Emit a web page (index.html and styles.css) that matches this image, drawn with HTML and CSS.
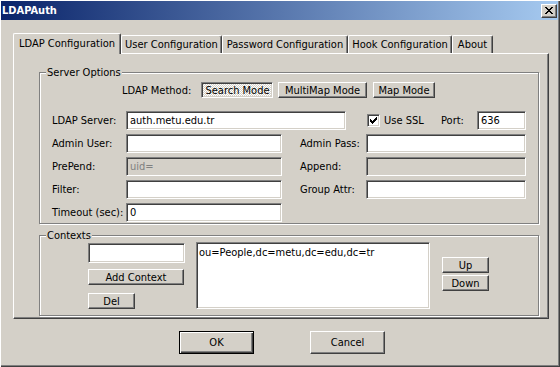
FILE: index.html
```html
<!DOCTYPE html>
<html>
<head>
<meta charset="utf-8">
<title>LDAPAuth</title>
<link rel="stylesheet" href="styles.css">
</head>
<body>
<div class="window">
  <div class="titlebar">
    <span class="title">LDAPAuth</span>
    <span class="close-btn">
      <svg width="8" height="7" viewBox="0 0 8 7"><path d="M0 0h2v1h-2z M6 0h2v1h-2z M1 1h2v1h-2z M5 1h2v1h-2z M2 2h4v1h-4z M3 3h2v1h-2z M2 4h4v1h-4z M1 5h2v1h-2z M5 5h2v1h-2z M0 6h2v1h-2z M6 6h2v1h-2z" fill="#000"/></svg>
    </span>
  </div>
  <div class="content">
    <div class="tabs">
      <div class="tab active t1">LDAP Configuration</div>
      <div class="tab t2">User Configuration</div>
      <div class="tab t3">Password Configuration</div>
      <div class="tab t4">Hook Configuration</div>
      <div class="tab t5">About</div>
    </div>
    <div class="panel">
      <div class="group server">
        <div class="legend">Server Options</div>
        <div class="method-row">
          <span class="method-label">LDAP Method:</span>
          <button class="btn pressed w-search">Search Mode</button>
          <button class="btn w-multi">MultiMap Mode</button>
          <button class="btn w-map">Map Mode</button>
        </div>
        <div class="row first">
          <span class="lbl">LDAP Server:</span>
          <input class="field w-server" value="auth.metu.edu.tr">
          <span class="check"><svg width="7" height="7" viewBox="0 0 7 7"><path d="M6 0h1v1h-1z M5 1h2v1h-2z M0 2h1v1h-1z M4 2h3v1h-3z M0 3h2v1h-2z M3 3h3v1h-3z M0 4h5v1h-5z M1 5h3v1h-3z M2 6h1v1h-1z" fill="#000"/></svg></span>
          <span class="check-text">Use SSL</span>
          <span class="port-lbl">Port:</span>
          <input class="field w-port" value="636">
        </div>
        <div class="row">
          <span class="lbl">Admin User:</span>
          <input class="field w-left" value="">
          <span class="lbl-r">Admin Pass:</span>
          <input class="field w-right" value="">
        </div>
        <div class="row">
          <span class="lbl">PrePend:</span>
          <input class="field w-left" value="uid=" disabled>
          <span class="lbl-r">Append:</span>
          <input class="field w-right" value="" disabled>
        </div>
        <div class="row">
          <span class="lbl">Filter:</span>
          <input class="field w-left" value="">
          <span class="lbl-r">Group Attr:</span>
          <input class="field w-right" value="">
        </div>
        <div class="row">
          <span class="lbl">Timeout (sec):</span>
          <input class="field w-left" value="0">
        </div>
      </div>
      <div class="group contexts">
        <div class="legend">Contexts</div>
        <div class="ctx-row">
          <div class="ctx-left">
            <input class="field w-ctx" value="">
            <button class="btn w-add">Add Context</button>
            <button class="btn w-del">Del</button>
          </div>
          <div class="listbox">ou=People,dc=metu,dc=edu,dc=tr</div>
          <div class="ctx-right">
            <button class="btn w-up">Up</button>
            <button class="btn w-down">Down</button>
          </div>
        </div>
      </div>
    </div>
    <div class="actions">
      <button class="btn default w-ok">OK</button>
      <button class="btn w-cancel">Cancel</button>
    </div>
  </div>
</div>
</body>
</html>
```
FILE: styles.css
```css
* { box-sizing: border-box; }

html, body {
  margin: 0;
  padding: 0;
  background: #d4d0c8;
}

body {
  font-family: "DejaVu Sans Condensed", "DejaVu Sans", sans-serif;
  font-size: 11px;
  line-height: 13px;
  color: #000;
}

.window {
  width: 560px;
  height: 367px;
  overflow: hidden;
  box-shadow: inset 1px 1px 0 #fff, inset -1px -1px 0 #404040, inset -2px -2px 0 #808080;
}

.titlebar {
  margin: 1px 2px 0 1px;
  height: 19px;
  background: linear-gradient(to right, #0a246a, #a6caf0);
  display: flex;
  align-items: center;
  justify-content: space-between;
  padding: 0 1px 0 1px;
}

.title {
  color: #fff;
  font-weight: bold;
}

.close-btn {
  width: 16px;
  height: 14px;
  margin-top: 1px;
  background: #d4d0c8;
  border: 1px solid;
  border-color: #fff #404040 #404040 #fff;
  box-shadow: inset -1px -1px 0 #808080;
  display: flex;
  align-items: center;
  justify-content: center;
  padding: 0 1px 1px 0;
}
.close-btn svg { display: block; }

.content {
  padding: 13px 0 0 13px;
}

/* Tabs */
.tabs {
  display: flex;
  align-items: flex-start;
  height: 21px;
  margin-bottom: -1px;
  position: relative;
  z-index: 1;
}

.tab {
  height: 18px;
  margin-top: 2px;
  border: 1px solid;
  border-bottom: none;
  border-color: #fff #404040 #fff #fff;
  border-radius: 2px 2px 0 0;
  box-shadow: inset -1px 0 0 #808080;
  padding-top: 2px;
  text-align: center;
  white-space: nowrap;
  background: #d4d0c8;
}

.tab.active {
  height: 21px;
  margin-top: 0;
  padding-top: 3px;
}

.t1 { width: 108px; }
.t2 { width: 101px; }
.t3 { width: 126px; }
.t4 { width: 104px; }
.t5 { width: 41px; }

.panel {
  width: 536px;
  height: 266px;
  border: 1px solid;
  border-color: #fff #404040 #404040 #fff;
  box-shadow: inset -1px -1px 0 #808080;
  padding: 18px 0 0 25px;
}

/* Group boxes */
.group {
  width: 500px;
  border: 1px solid #808080;
  box-shadow: inset 1px 1px 0 #fff, 1px 1px 0 #fff;
}

.server { height: 152px; }
.contexts { height: 81px; margin-top: 11px; }

.legend {
  display: table;
  margin: -7px 0 -6px 6px;
  padding: 0 1px;
  background: #d4d0c8;
}

/* Buttons */
.btn {
  font: inherit;
  color: #000;
  height: 16px;
  padding: 0;
  margin: 0;
  background: #d4d0c8;
  border: 1px solid;
  border-color: #fff #404040 #404040 #fff;
  box-shadow: inset -1px -1px 0 #808080;
  border-radius: 0;
  line-height: 13px;
  text-align: center;
  white-space: nowrap;
}

.btn.pressed {
  border-color: #808080 #fff #fff #808080;
  box-shadow: inset 1px 1px 0 #404040, inset -1px -1px 0 #d4d0c8;
  background: repeating-conic-gradient(#ffffff 0 25%, #d4d0c8 0 50%) 0 0 / 2px 2px;
  padding: 1px 0 0 1px;
}

.btn.default {
  border: 1px solid #000;
  box-shadow: inset 1px 1px 0 #fff, inset -1px -1px 0 #404040, inset -2px -2px 0 #808080;
}

/* Method row */
.method-row {
  display: flex;
  align-items: center;
  margin-top: 9px;
  padding-left: 82px;
}
.method-label { width: 79px; }
.w-search { width: 72px; }
.w-multi { width: 89px; margin-left: 5px; }
.w-map { width: 62px; margin-left: 6px; }

/* Field rows */
.row {
  display: flex;
  align-items: center;
  height: 19px;
  margin-top: 4px;
  padding-left: 12px;
}
.row.first { margin-top: 13px; }

.lbl { width: 74px; white-space: nowrap; }
.lbl-r { width: 66px; margin-left: 18px; white-space: nowrap; }

.field {
  font: inherit;
  color: #000;
  height: 19px;
  margin: 0;
  padding: 0 0 0 3px;
  background: #fff;
  border: 1px solid;
  border-color: #808080 #fff #fff #808080;
  box-shadow: inset 1px 1px 0 #404040, inset -1px -1px 0 #d4d0c8;
  border-radius: 0;
  outline: none;
}
.field:disabled {
  background: #d4d0c8;
  color: #808080;
}

.w-server { width: 220px; }
.w-left { width: 156px; }
.w-right { width: 160px; }
.w-port { width: 49px; }

.check {
  width: 13px;
  height: 13px;
  margin-left: 21px;
  background: #fff;
  border: 1px solid;
  border-color: #808080 #fff #fff #808080;
  box-shadow: inset 1px 1px 0 #404040, inset -1px -1px 0 #d4d0c8;
  padding: 2px;
}
.check svg { display: block; }

.check-text { width: 61px; padding-left: 4px; }
.port-lbl { width: 36px; }

/* Contexts */
.ctx-row {
  display: flex;
  align-items: flex-start;
  padding-left: 48px;
}

.ctx-left {
  display: flex;
  flex-direction: column;
  align-items: flex-start;
}

.w-ctx { width: 97px; height: 20px; margin-top: 7px; }
.w-add { width: 96px; margin-top: 6px; }
.w-del { width: 47px; margin-top: 8px; }

.listbox {
  width: 234px;
  height: 67px;
  margin: 6px 0 0 11px;
  background: #fff;
  border: 1px solid;
  border-color: #808080 #fff #fff #808080;
  box-shadow: inset 1px 1px 0 #404040, inset -1px -1px 0 #d4d0c8;
  padding: 3px 0 0 2px;
  white-space: nowrap;
}

.ctx-right {
  display: flex;
  flex-direction: column;
  margin-left: 12px;
}
.w-up { width: 47px; margin-top: 21px; }
.w-down { width: 47px; margin-top: 2px; }

/* Bottom actions */
.actions {
  display: flex;
  margin-top: 12px;
  padding-left: 166px;
}
.w-ok { width: 75px; height: 23px; }
.w-cancel { width: 75px; height: 23px; margin-left: 56px; }
```
